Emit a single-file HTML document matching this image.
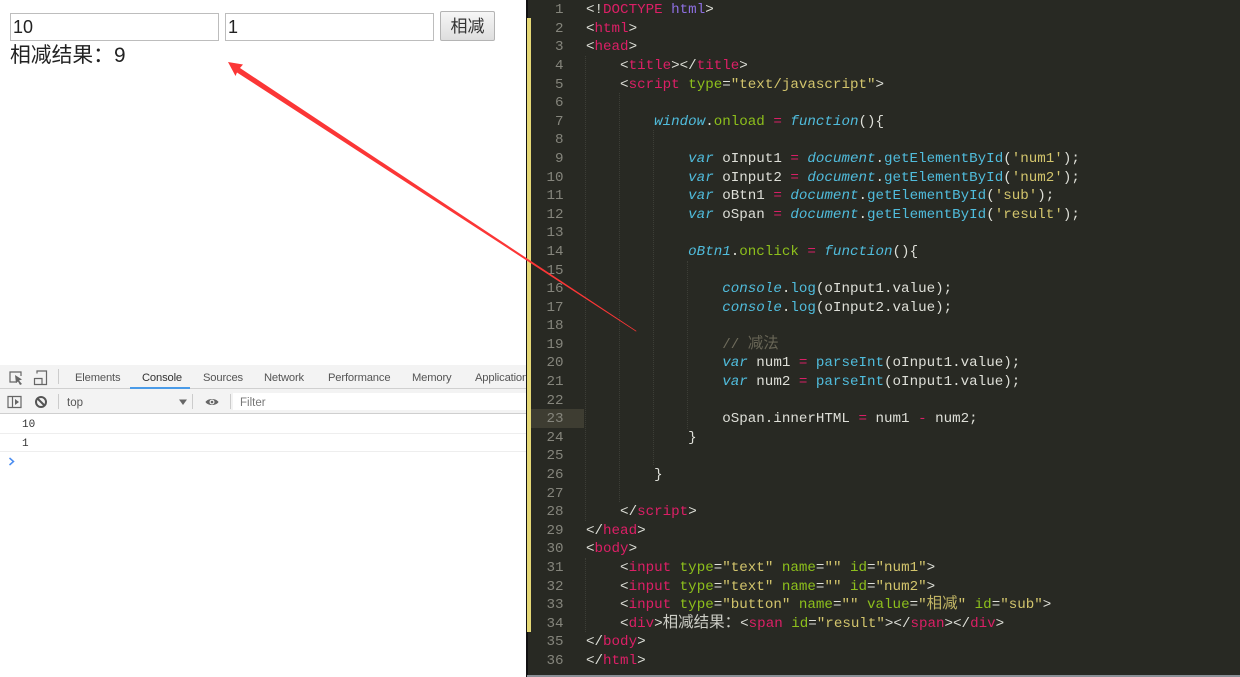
<!DOCTYPE html>
<html lang="zh"><head><meta charset="utf-8"><title>相减</title>
<style>
html,body{margin:0;padding:0;background:#fff}
body{width:1240px;height:677px;position:relative;overflow:hidden;font-family:"Liberation Sans","Noto Sans CJK SC",sans-serif}
.a{position:absolute}
.in{box-sizing:border-box;border:1px solid #bdbdbd;background:#fff;height:28px;top:13px;font-size:18px;line-height:26px;padding-left:2px;color:#222}
.tab{top:371px;font-size:11.2px;letter-spacing:-.15px;line-height:14px;color:#555;white-space:nowrap}
#ed{left:527px;top:0;width:713px;height:677px;background:#282923}
#code{position:absolute;left:59px;top:1.2px;margin:0;font:14.2px/18.6px "Liberation Mono","Noto Sans CJK SC",monospace;color:#dedfd8;white-space:pre;filter:blur(.3px)}
#nums{position:absolute;left:0;width:36.5px;top:1.2px;margin:0;font:14.2px/18.6px "Liberation Mono",monospace;color:#85857c;text-align:right;white-space:pre;filter:blur(.3px)}
.t{color:#dc1f66}.g{color:#8dbf1c}.s{color:#d2c46c}.j{color:#50bcdc;font-style:italic}.b{color:#50bcdc}.p{color:#d81f66}.c{color:#6f6c5c}.v{color:#8d6fe0}
.k{font-family:"Noto Sans CJK TC","Noto Sans CJK SC",sans-serif;font-size:15.5px;line-height:0;opacity:.9}
.gd{position:absolute;width:0;border-left:1px dotted #3d3e37}
</style></head><body>
<div class="a in" style="left:10px;width:209px">10</div>
<div class="a in" style="left:225px;width:209px">1</div>
<div class="a" style="left:440px;top:11px;width:55px;height:30px;box-sizing:border-box;border:1px solid #b4b4b4;border-radius:2px;background:linear-gradient(#f6f6f6,#dedede);font-size:17px;line-height:29px;text-align:center;color:#333">相减</div>
<div class="a" style="left:10px;top:42px;font-size:20.8px;line-height:27px;color:#222;white-space:nowrap">相减结果：9</div>

<div class="a" style="left:0;top:365px;width:527px;height:23px;background:#f3f3f3"></div>
<div class="a" style="left:0;top:388px;width:527px;height:1px;background:#d0d0d0"></div>
<div class="a" style="left:0;top:389px;width:527px;height:24px;background:#f3f3f3"></div>
<div class="a" style="left:0;top:413px;width:527px;height:1px;background:#cfcfcf"></div>
<div class="a" style="left:130px;top:387px;width:60px;height:2px;background:#4a9be8"></div>
<div class="a" style="left:58px;top:369px;width:1px;height:15px;background:#ccc"></div>
<div class="a" style="left:58px;top:394px;width:1px;height:15px;background:#ccc"></div>
<div class="a" style="left:192px;top:394px;width:1px;height:15px;background:#ccc"></div>
<div class="a" style="left:230px;top:394px;width:1px;height:15px;background:#ccc"></div>
<div class="a" style="left:233px;top:393px;width:294px;height:17px;background:#fff"></div>
<svg class="a" style="left:0;top:365px" width="230" height="50" fill="none" stroke="#666">
<path d="M17 17H10V7H21V11" stroke-width="1.200"/>
<path d="M15 10L22 14.500L19 15.500L22 19L20 20L18 16.500L16 18Z" fill="#666" stroke="none"/>
<path d="M34.500 13V19.500H42V13.500H34.500M37 8.500V6H46.500V19.500H42" stroke-width="1.200"/>
<path d="M8 31.500H21V42.500H8ZM12.500 31.500V42.500" stroke-width="1.200"/>
<path d="M15 34L19 37L15 40Z" fill="#666" stroke="none"/>
<circle cx="41" cy="37" r="5" stroke-width="2" stroke="#555"/>
<path d="M37.500 33.500L44.500 40.500" stroke-width="2" stroke="#555"/>
<path d="M179 34.500H187L183 40Z" fill="#666" stroke="none"/>
<path d="M205.500 37C208 33 216 33 218.500 37C216 41 208 41 205.500 37Z" fill="#666" stroke="none"/>
<circle cx="212" cy="37" r="2.500" fill="#f3f3f3" stroke="none"/>
<circle cx="212" cy="37" r="1.300" fill="#666" stroke="none"/>
</svg>
<div class="a tab" style="left:75px">Elements</div>
<div class="a tab" style="left:142px;color:#333">Console</div>
<div class="a tab" style="left:203px">Sources</div>
<div class="a tab" style="left:264px">Network</div>
<div class="a tab" style="left:328px">Performance</div>
<div class="a tab" style="left:412px">Memory</div>
<div class="a tab" style="left:475px;width:52px;overflow:hidden">Application</div>
<div class="a" style="left:67px;top:396px;font-size:11.500px;line-height:14px;color:#555">top</div>
<div class="a" style="left:240px;top:396px;font-size:11.500px;line-height:14px;color:#777">Filter</div>
<div class="a" style="left:22px;top:418px;font:11px/14px 'Liberation Mono',monospace;color:#333">10</div>
<div class="a" style="left:0;top:433px;width:527px;height:1px;background:#eee"></div>
<div class="a" style="left:22px;top:437px;font:11px/14px 'Liberation Mono',monospace;color:#333">1</div>
<div class="a" style="left:0;top:451px;width:527px;height:1px;background:#eee"></div>
<svg class="a" style="left:8px;top:457px" width="8" height="9" fill="none"><path d="M1.500 1L5.500 4.500L1.500 8" stroke="#4a8cf0" stroke-width="1.500"/></svg>

<div class="a" id="ed">
<div class="a" style="left:-1px;top:0;width:1.500px;height:677px;background:#111"></div>
<div class="a" style="left:0;top:18px;width:4px;height:614px;background:#e5d876"></div>
<div class="a" style="left:4px;top:409px;width:53px;height:19px;background:#3e3d32"></div>
<pre id="nums">1
2
3
4
5
6
7
8
9
10
11
12
13
14
15
16
17
18
19
20
21
22
23
24
25
26
27
28
29
30
31
32
33
34
35
36</pre>
<div class="gd" style="left:58px;top:56px;height:465px"></div>
<div class="gd" style="left:58px;top:558px;height:74px"></div>
<div class="gd" style="left:92px;top:93px;height:409px"></div>
<div class="gd" style="left:126px;top:130px;height:335px"></div>
<div class="gd" style="left:160px;top:261px;height:168px"></div>
<pre id="code">&lt;!<span class="t">DOCTYPE</span> <span class="v">html</span>&gt;
&lt;<span class="t">html</span>&gt;
&lt;<span class="t">head</span>&gt;
    &lt;<span class="t">title</span>&gt;&lt;/<span class="t">title</span>&gt;
    &lt;<span class="t">script</span> <span class="g">type</span>=<span class="s">"text/javascript"</span>&gt;

        <span class="j">window</span>.<span class="g">onload</span> <span class="p">=</span> <span class="j">function</span>(){

            <span class="j">var</span> oInput1 <span class="p">=</span> <span class="j">document</span>.<span class="b">getElementById</span>(<span class="s">'num1'</span>);
            <span class="j">var</span> oInput2 <span class="p">=</span> <span class="j">document</span>.<span class="b">getElementById</span>(<span class="s">'num2'</span>);
            <span class="j">var</span> oBtn1 <span class="p">=</span> <span class="j">document</span>.<span class="b">getElementById</span>(<span class="s">'sub'</span>);
            <span class="j">var</span> oSpan <span class="p">=</span> <span class="j">document</span>.<span class="b">getElementById</span>(<span class="s">'result'</span>);

            <span class="j">oBtn1</span>.<span class="g">onclick</span> <span class="p">=</span> <span class="j">function</span>(){

                <span class="j">console</span>.<span class="b">log</span>(oInput1.value);
                <span class="j">console</span>.<span class="b">log</span>(oInput2.value);

                <span class="c">// <span class="k">减法</span></span>
                <span class="j">var</span> num1 <span class="p">=</span> <span class="b">parseInt</span>(oInput1.value);
                <span class="j">var</span> num2 <span class="p">=</span> <span class="b">parseInt</span>(oInput1.value);

                oSpan.innerHTML <span class="p">=</span> num1 <span class="p">-</span> num2;
            }

        }

    &lt;/<span class="t">script</span>&gt;
&lt;/<span class="t">head</span>&gt;
&lt;<span class="t">body</span>&gt;
    &lt;<span class="t">input</span> <span class="g">type</span>=<span class="s">"text"</span> <span class="g">name</span>=<span class="s">""</span> <span class="g">id</span>=<span class="s">"num1"</span>&gt;
    &lt;<span class="t">input</span> <span class="g">type</span>=<span class="s">"text"</span> <span class="g">name</span>=<span class="s">""</span> <span class="g">id</span>=<span class="s">"num2"</span>&gt;
    &lt;<span class="t">input</span> <span class="g">type</span>=<span class="s">"button"</span> <span class="g">name</span>=<span class="s">""</span> <span class="g">value</span>=<span class="s">"<span class="k">相减</span>"</span> <span class="g">id</span>=<span class="s">"sub"</span>&gt;
    &lt;<span class="t">div</span>&gt;<span class="k">相减结果：</span>&lt;<span class="t">span</span> <span class="g">id</span>=<span class="s">"result"</span>&gt;&lt;/<span class="t">span</span>&gt;&lt;/<span class="t">div</span>&gt;
&lt;/<span class="t">body</span>&gt;
&lt;/<span class="t">html</span>&gt;</pre>
<div class="a" style="left:0;top:675px;width:713px;height:2px;background:#8a8f96"></div>
</div>

<svg class="a" style="left:0;top:0" width="1240" height="677">
<path d="M228 62L243 64.500L240 68L636.500 331L636 331.500L237 72.500L235.500 76Z" fill="#fb3636"/>
</svg>
</body></html>
